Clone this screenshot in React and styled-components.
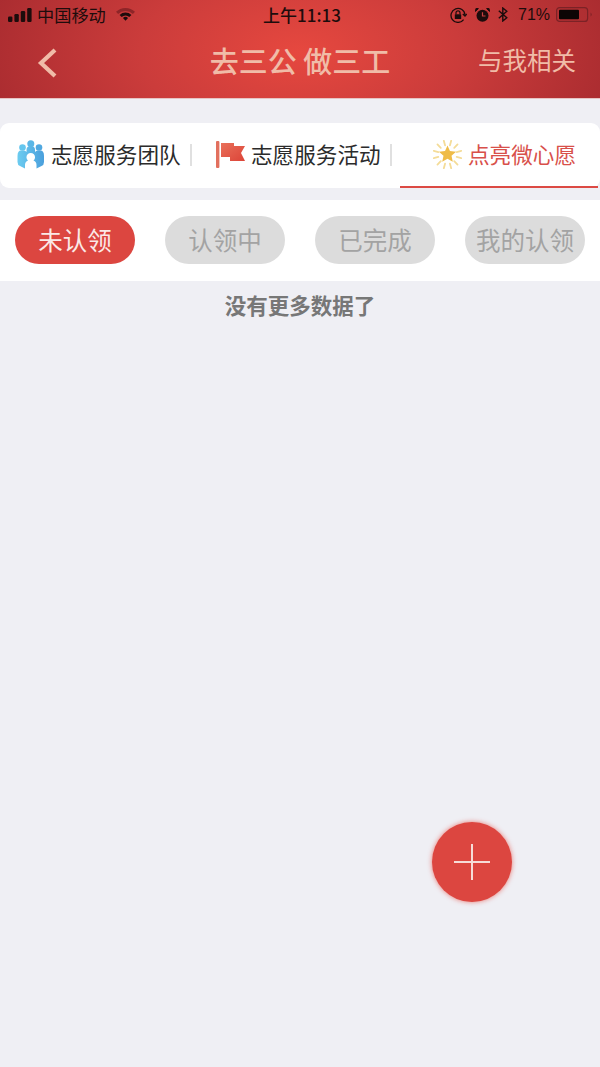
import React from 'react';
import styled, { createGlobalStyle } from 'styled-components';

const GlobalStyle = createGlobalStyle`
  html, body {
    margin: 0;
    padding: 0;
    background: #efeff4;
  }
  * {
    box-sizing: border-box;
  }
`;

const Page = styled.div`
  position: relative;
  width: 600px;
  height: 1067px;
  overflow: hidden;
  background: #efeff4;
  font-family: "Liberation Sans", "Noto Sans CJK SC", sans-serif;
`;

const Header = styled.header`
  height: 99px;
  background: radial-gradient(ellipse 320px 170px at 300px 52px, #e6483f 0%, #cb3c3b 50%, #aa2c30 100%);
  border-bottom: 1px solid #e6c4c4;
`;

const StatusBar = styled.div`
  height: 30px;
  padding: 0 8px 1px 8px;
  display: flex;
  align-items: center;
  color: #1d0c0c;
`;

const StatusSide = styled.div`
  flex: 1;
  display: flex;
  align-items: center;
  gap: ${p => p.$gap || 5}px;
  justify-content: ${p => (p.$end ? 'flex-end' : 'flex-start')};
`;

const Carrier = styled.span`
  font-family: "Noto Sans CJK SC", sans-serif;
  font-size: 17.2px;
  line-height: 20px;
  margin-right: 5px;
  margin-left: -1px;
`;

const Clock = styled.span`
  font-family: "Noto Sans CJK SC", sans-serif;
  font-size: 17px;
  font-weight: 500;
  line-height: 20px;
  margin-left: 4px;
`;

const Percent = styled.span`
  font-size: 16px;
  margin: 0 -2px 0 2px;
`;

const NavBar = styled.nav`
  height: 60px;
  padding: 0 24px 0 37px;
  display: flex;
  align-items: center;
  justify-content: space-between;
  position: relative;
  color: #f0bca8;
`;

const NavTitle = styled.h1`
  position: absolute;
  left: 0;
  right: 0;
  margin: 0;
  text-align: center;
  font-family: "Noto Sans CJK SC", sans-serif;
  font-size: 29px;
  font-weight: 500;
  line-height: 36px;
`;

const NavLink = styled.span`
  font-family: "Noto Sans CJK SC", sans-serif;
  font-size: 24.5px;
  line-height: 32px;
`;

const BackIcon = styled.svg`
  margin-top: 5px;
`;

const TabCard = styled.div`
  margin-top: 24px;
  height: 65px;
  background: #fff;
  border-radius: 9px;
  display: grid;
  grid-template-columns: 200px 200px 198px;
`;

const Tab = styled.div`
  display: flex;
  align-items: center;
  padding-left: ${p => p.$inset}px;
  gap: 6px;
  height: 65px;
  border-bottom: ${p => (p.$active ? '2px solid #dc4a44' : '2px solid transparent')};
  color: ${p => (p.$active ? '#d8504a' : '#2b2b2b')};
  font-family: "Noto Sans CJK SC", sans-serif;
  font-size: 21.6px;
  line-height: 28px;
`;

const TabLabel = styled.span`
  margin-top: -1px;
`;

const TabRule = styled.span`
  width: 2px;
  height: 22px;
  margin-left: 3px;
  background: #e0e0e0;
`;

const FilterBar = styled.div`
  margin-top: 12px;
  height: 81px;
  background: #fff;
  padding: 16px 15px 0;
  display: flex;
  align-items: flex-start;
  justify-content: space-between;
`;

const Pill = styled.div`
  width: 120px;
  height: 48px;
  border-radius: 24px;
  padding-bottom: 1px;
  display: flex;
  align-items: center;
  justify-content: center;
  background: ${p => (p.$active ? '#dc4640' : '#dcdcdc')};
  color: ${p => (p.$active ? '#fbe9e6' : '#a3a3a3')};
  font-family: "Noto Sans CJK SC", sans-serif;
  font-size: 24.5px;
  white-space: nowrap;
`;

const EmptyNote = styled.p`
  margin: 9px 0 0;
  text-align: center;
  color: #777;
  font-family: "Noto Sans CJK SC", sans-serif;
  font-size: 21.5px;
  font-weight: 700;
  line-height: 30px;
`;

const Fab = styled.button`
  position: absolute;
  left: 432px;
  top: 822px;
  width: 80px;
  height: 80px;
  padding: 0;
  border: 0;
  border-radius: 50%;
  background: #dc4640;
  box-shadow: 0 0 5px rgba(232, 90, 80, 0.8);
  display: flex;
  align-items: center;
  justify-content: center;
`;

const Signal = () => (
  <svg width="25" height="14" viewBox="0 0 25 14">
    <rect x="0" y="8.5" width="4.4" height="5.5" rx="1.2" fill="#1d0c0c" />
    <rect x="6.4" y="6" width="4.4" height="8" rx="1.2" fill="#1d0c0c" />
    <rect x="12.8" y="3" width="4.4" height="11" rx="1.2" fill="#1d0c0c" />
    <rect x="19.2" y="0" width="4.4" height="14" rx="1.2" fill="#1d0c0c" />
  </svg>
);

const Wifi = () => (
  <svg width="19" height="13" viewBox="0 0 18 12">
    <path d="M0 3.5 A13 13 0 0 1 18 3.5 L16 5.6 A10 10 0 0 0 2 5.6 Z" fill="#8e2528" />
    <path d="M3.4 6.4 A8 8 0 0 1 14.6 6.4 L12.6 8.4 A5.2 5.2 0 0 0 5.4 8.4 Z" fill="#1d0c0c" />
    <path d="M6.6 9.3 A3.6 3.6 0 0 1 11.4 9.3 L9 12 Z" fill="#1d0c0c" />
  </svg>
);

const RotationLock = () => (
  <svg width="17" height="16" viewBox="0 0 17 16" fill="none" stroke="#1d0c0c" strokeWidth="1.3">
    <path d="M13.6 12.6 A7 7 0 1 1 15 8" />
    <path d="M12.8 7 L15 9 L16.8 7" />
    <rect x="4.8" y="7.2" width="6.4" height="4.8" rx="0.6" fill="#1d0c0c" stroke="none" />
    <path d="M6 7.2 V5.8 A2 2 0 0 1 10 5.8 V7.2" strokeWidth="1.2" />
  </svg>
);

const Alarm = () => (
  <svg width="15" height="14" viewBox="0 0 15 14">
    <circle cx="7.5" cy="7.8" r="6" fill="#1d0c0c" />
    <path d="M7.5 4.2 V8 H10.5" stroke="#c8403f" strokeWidth="1.2" fill="none" />
    <path d="M0.4 3.4 L3.4 0.6 L1 0.4 Z M14.6 3.4 L11.6 0.6 L14 0.4 Z" fill="#1d0c0c" stroke="#1d0c0c" />
  </svg>
);

const Bluetooth = () => (
  <svg width="10" height="15" viewBox="0 0 10 15" fill="none" stroke="#1d0c0c" strokeWidth="1.4">
    <path d="M0.8 3.8 L8.8 10.8 L4.8 14 V1 L8.8 4.2 L0.8 11.2" />
  </svg>
);

const Battery = () => (
  <svg width="36" height="15" viewBox="0 0 36 15">
    <rect x="0.6" y="0.6" width="31" height="13.8" rx="3" fill="none" stroke="#7c2226" strokeWidth="1.2" />
    <rect x="3" y="2.8" width="20" height="9.4" rx="1" fill="#0c0505" />
    <path d="M34.6 5.5 A2.5 2.5 0 0 1 34.6 9.5 Z" fill="#7c2226" />
  </svg>
);

const Back = () => (
  <BackIcon width="22" height="32" viewBox="0 0 22 32" fill="none" stroke="#f0bca8" strokeWidth="4.2">
    <path d="M18 3 L4 16 L18 29" />
  </BackIcon>
);

const TeamIcon = () => (
  <svg width="29" height="29" viewBox="0 0 29 29">
    <defs>
      <linearGradient id="team" x1="0" x2="1" y1="0" y2="0">
        <stop offset="0" stopColor="#6cccf0" />
        <stop offset="1" stopColor="#4a9fdc" />
      </linearGradient>
    </defs>
    <circle cx="6.5" cy="7.5" r="3.3" fill="#64c6ee" />
    <circle cx="14.8" cy="3.8" r="3.5" fill="#5ab6e6" />
    <circle cx="23" cy="7.5" r="3.3" fill="#50a8e0" />
    <path
      fill="url(#team)"
      d="M1.5 16 Q1.5 10.5 5 10.5 H8 Q9.5 10.5 10.5 12 V10 Q10.5 6.5 13 6.5 H16.5 Q19 6.5 19 10 V12 Q20 10.5 21.5 10.5 H24.5 Q28 10.5 28 16 V22 Q28 25 25.5 26 L20.5 28.5 V25 Q20.5 21.5 17.5 20.5 A4.3 4.3 0 1 0 12 20.5 Q9 21.5 9 25 V28.5 L4 26 Q1.5 25 1.5 22 Z"
    />
  </svg>
);

const FlagIcon = () => (
  <svg width="29" height="29" viewBox="0 0 29 29">
    <defs>
      <linearGradient id="flag" x1="0" x2="1" y1="0" y2="1">
        <stop offset="0" stopColor="#e9705a" />
        <stop offset="1" stopColor="#dc4438" />
      </linearGradient>
    </defs>
    <rect x="0" y="1" width="3.4" height="27" rx="1" fill="#e2705e" />
    <path d="M5 3 H18 V6 H29 L25 13 L29 21 H14 V17 H5 Z" fill="url(#flag)" />
  </svg>
);

const SparkIcon = () => {
  const rays = Array.from({ length: 12 }, (_, i) => (i * Math.PI) / 6 + Math.PI / 12);
  const star = Array.from({ length: 10 }, (_, i) => {
    const a = (i * Math.PI) / 5 - Math.PI / 2;
    const r = i % 2 ? 4.2 : 9;
    return `${14.5 + Math.cos(a) * r},${14.5 + Math.sin(a) * r}`;
  }).join(' ');
  return (
    <svg width="29" height="29" viewBox="0 0 29 29">
      {rays.map((a, i) => (
        <line
          key={i}
          x1={14.5 + Math.cos(a) * 9.5}
          y1={14.5 + Math.sin(a) * 9.5}
          x2={14.5 + Math.cos(a) * 14.2}
          y2={14.5 + Math.sin(a) * 14.2}
          stroke="#f4dc98"
          strokeWidth="1.8"
          strokeLinecap="round"
        />
      ))}
      <polygon points={star} fill="#efbc48" />
    </svg>
  );
};

const Plus = () => (
  <svg width="36" height="36" viewBox="0 0 36 36" stroke="#f6dcd8" strokeWidth="2">
    <path d="M0 18 H36 M18 0 V36" />
  </svg>
);

const App = () => (
  <Page>
    <GlobalStyle />
    <Header>
      <StatusBar>
        <StatusSide>
          <Signal />
          <Carrier>中国移动</Carrier>
          <Wifi />
        </StatusSide>
        <Clock>上午11:13</Clock>
        <StatusSide $end $gap={8}>
          <RotationLock />
          <Alarm />
          <Bluetooth />
          <Percent>71%</Percent>
          <Battery />
        </StatusSide>
      </StatusBar>
      <NavBar>
        <Back />
        <NavTitle>去三公 做三工</NavTitle>
        <NavLink>与我相关</NavLink>
      </NavBar>
    </Header>
    <TabCard>
      <Tab $inset={16}>
        <TeamIcon />
        <TabLabel>志愿服务团队</TabLabel>
        <TabRule />
      </Tab>
      <Tab $inset={16}>
        <FlagIcon />
        <TabLabel>志愿服务活动</TabLabel>
        <TabRule />
      </Tab>
      <Tab $inset={33} $active>
        <SparkIcon />
        <TabLabel>点亮微心愿</TabLabel>
      </Tab>
    </TabCard>
    <FilterBar>
      <Pill $active>未认领</Pill>
      <Pill>认领中</Pill>
      <Pill>已完成</Pill>
      <Pill>我的认领</Pill>
    </FilterBar>
    <EmptyNote>没有更多数据了</EmptyNote>
    <Fab aria-label="add">
      <Plus />
    </Fab>
  </Page>
);

export default App;
